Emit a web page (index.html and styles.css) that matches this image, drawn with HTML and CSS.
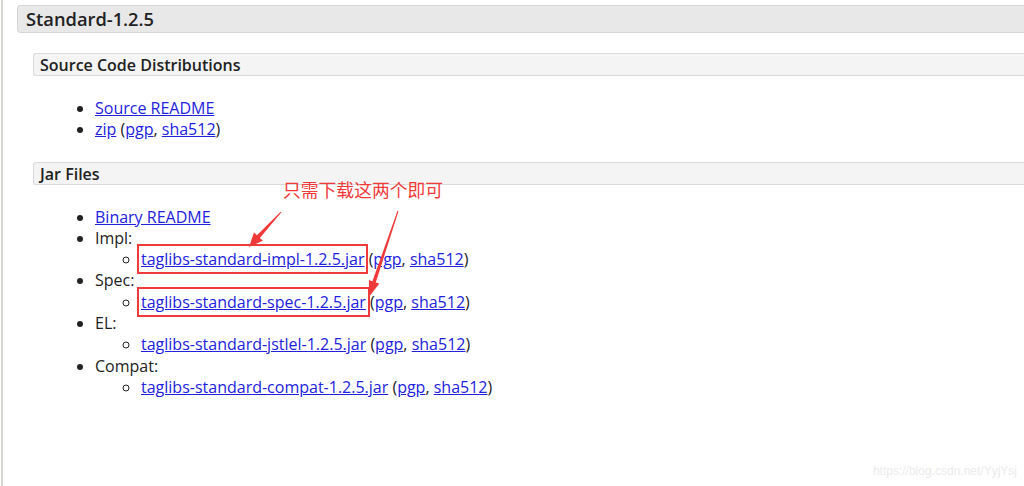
FILE: index.html
```html
<!DOCTYPE html>
<html lang="en">
<head>
    <meta charset="UTF-8">
    <meta name="viewport" content="width=device-width, initial-scale=1.0">
    <title>Standard-1.2.5</title>
    <link rel="stylesheet" href="styles.css">
</head>
<body>
    <div class="page">
        <h2 class="release">Standard-1.2.5</h2>

        <div class="block">
            <!-- Código fonte -->
            <h3 class="block-title">Source Code Distributions</h3>
            <ul class="files">
                <li><a href="#">Source README</a></li>
                <li><a href="#">zip</a> (<a href="#">pgp</a>, <a href="#">sha512</a>)</li>
            </ul>

            <!-- Arquivos jar -->
            <h3 class="block-title">Jar Files</h3>
            <ul class="files">
                <li><a href="#">Binary README</a></li>
                <li>Impl:
                    <ul>
                        <li><a href="#" class="marked">taglibs-standard-impl-1.2.5.jar</a> (<a href="#">pgp</a>, <a href="#">sha512</a>)</li>
                    </ul>
                </li>
                <li>Spec:
                    <ul>
                        <li><a href="#" class="marked">taglibs-standard-spec-1.2.5.jar</a> (<a href="#">pgp</a>, <a href="#">sha512</a>)</li>
                    </ul>
                </li>
                <li>EL:
                    <ul>
                        <li><a href="#">taglibs-standard-jstlel-1.2.5.jar</a> (<a href="#">pgp</a>, <a href="#">sha512</a>)</li>
                    </ul>
                </li>
                <li>Compat:
                    <ul>
                        <li><a href="#">taglibs-standard-compat-1.2.5.jar</a> (<a href="#">pgp</a>, <a href="#">sha512</a>)</li>
                    </ul>
                </li>
            </ul>
        </div>

        <!-- Anotação -->
        <div class="note">只需下载这两个即可</div>
        <svg class="arrows" width="1024" height="486" viewBox="0 0 1024 486">
            <g fill="#f03a3a">
                <polygon points="281.4,212.3 259.9,238 262.9,240.7 249,247 254,232.6 257,235.3 280.6,211.7"/>
                <polygon points="398.5,211.2 375.8,282.4 379.3,283.6 369,297 368.9,280.1 372.4,281.3 397.5,210.8"/>
            </g>
        </svg>
    </div>
    <div class="watermark">https://blog.csdn.net/YyjYsj</div>
</body>
</html>
```

FILE: styles.css
```css
/* Página */
body {
    margin: 0;
    font-family: "Open Sans", "Noto Sans", sans-serif;
    color: #222;
    background-color: #ffffff;
}

.page {
    position: relative;
    min-height: 486px;
    margin-left: 1px;
    border-left: 2px solid #d8d8d2;
    padding-top: 5px;
    box-sizing: border-box;
}

/* Título da versão */
.release {
    margin: 0 0 0 14px;
    height: 28px;
    line-height: 26px;
    padding: 0 8px;
    font-size: 18.3px;
    font-weight: 600;
    background-color: #e8e8e8;
    border: 1px solid #d6d6d6;
    border-right: none;
    border-radius: 4px 0 0 4px;
    box-sizing: border-box;
}

.block {
    margin: 20px 0 0 30px;
}

.block-title {
    margin: 0;
    height: 23px;
    line-height: 22px;
    padding: 0 6px;
    font-size: 16px;
    font-weight: 600;
    background-color: #f4f4f4;
    border: 1px solid #dadada;
    border-right: none;
    border-radius: 3px 0 0 3px;
    box-sizing: border-box;
}

/* Listas */
.files {
    margin: 22px 0 21px 0;
    padding-left: 62px;
    font-size: 16px;
    line-height: 21.3px;
}

.files ul {
    margin: 0;
    padding-left: 46px;
    list-style-type: circle;
}

a {
    color: #2222dd;
}

.marked {
    outline: 2px solid #ef3b3b;
    outline-offset: 2px;
}

/* Anotação em vermelho */
.note {
    position: absolute;
    left: 280px;
    top: 176px;
    font-family: "Noto Sans CJK SC", sans-serif;
    font-size: 17.8px;
    color: #f03a3a;
}

.arrows {
    position: absolute;
    left: -3px;
    top: 0;
    pointer-events: none;
}

.watermark {
    position: absolute;
    right: 7px;
    bottom: 8px;
    font-family: "Liberation Sans", Arial, sans-serif;
    font-size: 12px;
    color: #ebebeb;
}
```
